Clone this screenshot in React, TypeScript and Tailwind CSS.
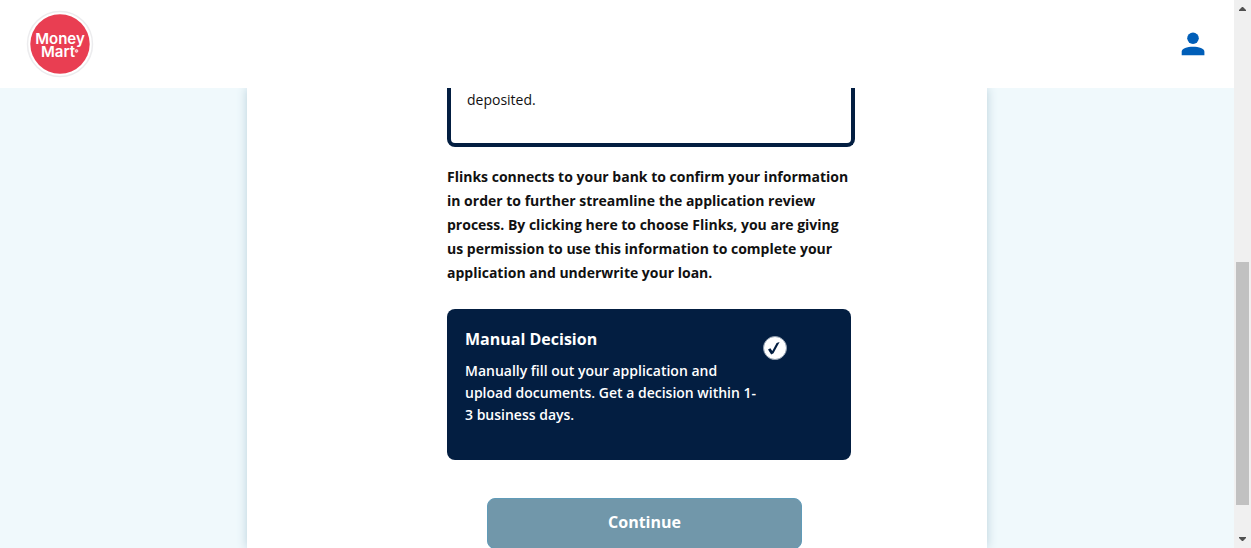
import React from "react";

function Logo() {
  return (
    <a href="#home" aria-label="Money Mart" className="block">
      <svg width="68" height="68" viewBox="0 0 68 68" aria-hidden="true">
        <circle cx="34" cy="34" r="32.5" fill="#fff" stroke="#ececee" strokeWidth="1.5" />
        <circle cx="34" cy="34" r="29.7" fill="#e93e52" />
        <text fill="#fff" fontFamily="Inter, sans-serif" fontWeight="600" fontSize="15" textAnchor="middle">
          <tspan x="34" y="34">Money</tspan>
          <tspan x="32" y="47">Mart</tspan>
        </text>
        <circle cx="50.5" cy="41" r="1.4" fill="#f6b3bb" stroke="#fff" strokeWidth="0.6" />
      </svg>
    </a>
  );
}

function Header() {
  return (
    <header className="flex h-22 shrink-0 items-center justify-between bg-white pr-7 pl-[26px]">
      <Logo />
      <button type="button" aria-label="Account" className="p-0">
        <svg width="26" height="26" viewBox="0 0 26 26" fill="#005eb8" aria-hidden="true">
          <ellipse cx="13" cy="7.2" rx="5.8" ry="5.7" />
          <path d="M1.7 24.2v-3.4c0-3.3 5.4-5 11.3-5s11.4 1.7 11.4 5v3.4z" />
        </svg>
      </button>
    </header>
  );
}

function FlinksOption() {
  return (
    <section className="w-[408px] rounded-b-lg border-4 border-t-0 border-[#031e41] px-4 pb-8">
      <p className="text-sm leading-[23px]">deposited.</p>
    </section>
  );
}

function ManualOption() {
  return (
    <label className="mt-6 flex w-[404px] items-start rounded-lg bg-[#031e41] px-[18px] pt-[18px] pb-[34px] text-white">
      <span className="block w-[298px]">
        <span className="block text-base leading-6 font-bold">Manual Decision</span>
        <span className="mt-[9px] block text-sm leading-[22px] font-semibold">
          Manually fill out your application and upload documents. Get a decision within 1-3 business days.
        </span>
      </span>
      <span className="mt-[9px] grid size-6 place-items-center">
        <input
          type="radio"
          name="decision"
          defaultChecked
          className="col-start-1 row-start-1 size-6 appearance-none rounded-full border border-[#8f9dae] bg-white"
        />
        <svg className="pointer-events-none col-start-1 row-start-1" width="24" height="24" viewBox="0 0 24 24" aria-hidden="true">
          <path d="M5 13.4l2.4-1.1 1.9 2.7 4.3-7.9 3-1.1-6.1 11.2-2.3 1.2z" fill="#031e41" />
        </svg>
      </span>
    </label>
  );
}

function Scrollbar() {
  return (
    <div aria-hidden="true" className="flex w-[17px] shrink-0 flex-col items-center bg-[#f0f0f0]">
      <svg width="17" height="17" viewBox="0 0 17 17" fill="#505050">
        <path d="M5 11h7v-1l-3-3h-1l-3 3z" />
      </svg>
      <div className="flex w-full flex-1 flex-col items-center">
        <div className="grow-[245]" />
        <div className="w-[13px] grow-[243] bg-[#c1c1c1]" />
        <div className="grow-[26]" />
      </div>
      <svg width="17" height="17" viewBox="0 0 17 17" fill="#505050">
        <path d="M5 6h7v1l-3 3h-1l-3-3z" />
      </svg>
    </div>
  );
}

export default function App() {
  return (
    <div className="flex h-screen overflow-hidden bg-[#f0f9fc] font-['Open_Sans',sans-serif] text-[#111]">
      <div className="flex min-w-0 flex-1 flex-col">
        <Header />
        <main className="flex min-h-0 flex-1 justify-center overflow-hidden">
          <div className="h-full w-full max-w-[740px] bg-white px-4 shadow-[0_0_10px_#b9d0db] md:pl-[200px]">
            <form onSubmit={(e) => e.preventDefault()}>
              <FlinksOption />
              <p className="mt-[18px] w-[404px] text-sm leading-6 font-bold">
                Flinks connects to your bank to confirm your information in order to further streamline the
                application review process. By clicking here to choose Flinks, you are giving us permission to use
                this information to complete your application and underwrite your loan.
              </p>
              <ManualOption />
              <button
                type="submit"
                className="mt-[38px] ml-10 block h-[51px] w-[315px] rounded-lg border border-[#609bb8] bg-[#7197aa] pb-1 text-base font-bold text-white"
              >
                Continue
              </button>
            </form>
          </div>
        </main>
      </div>
      <Scrollbar />
    </div>
  );
}
